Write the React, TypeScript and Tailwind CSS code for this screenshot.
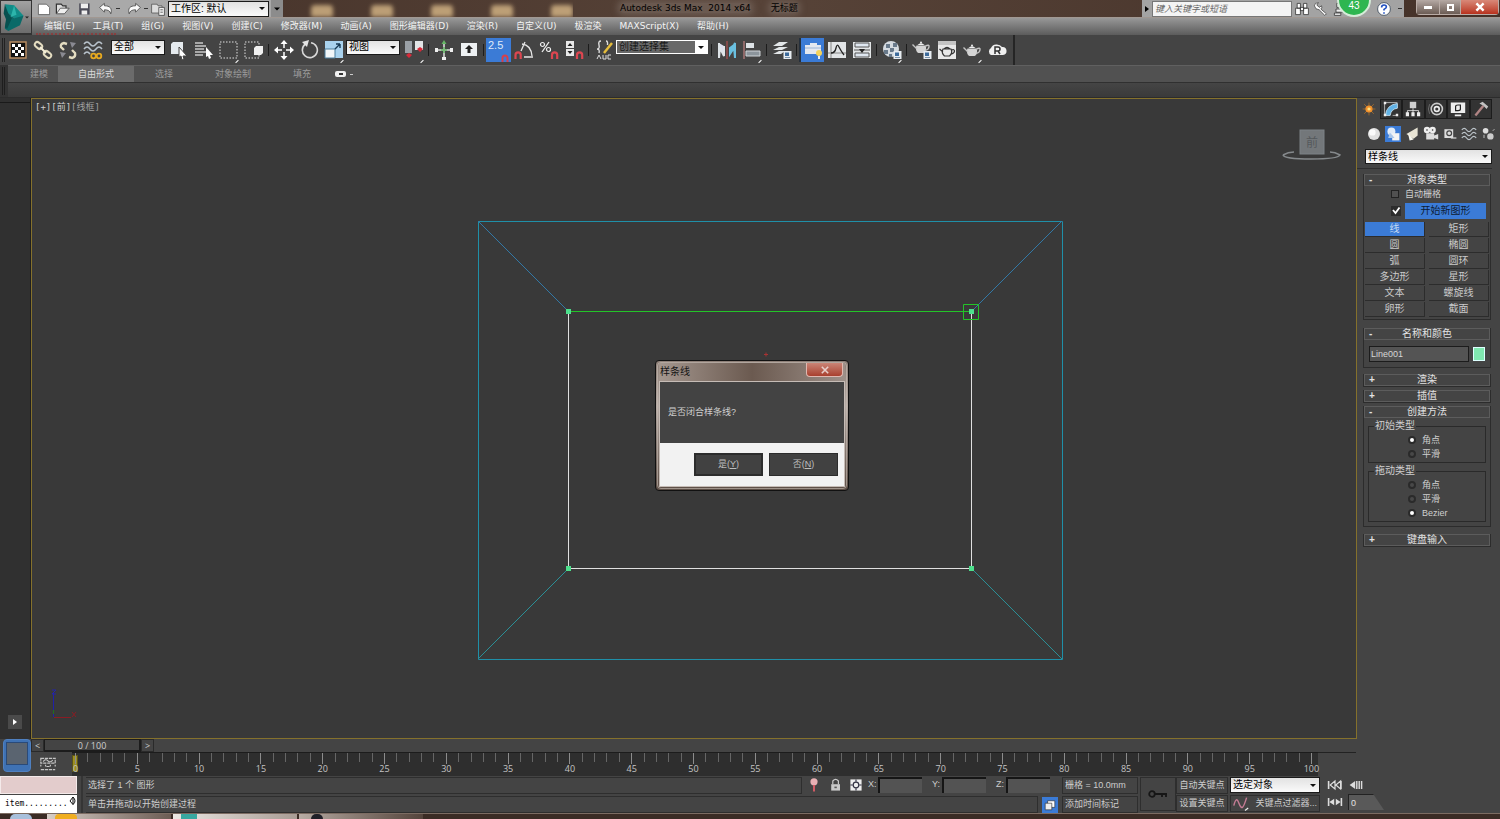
import React, { useState } from "react";

const CJK = "font-['Liberation_Sans','Noto_Sans_CJK_SC',sans-serif]";

const MENUS = [
  "编辑(E)", "工具(T)", "组(G)", "视图(V)", "创建(C)", "修改器(M)", "动画(A)", "图形编辑器(D)",
  "渲染(R)", "自定义(U)", "极渲染", "MAXScript(X)", "帮助(H)",
];

const SHAPES = ["线", "矩形", "圆", "椭圆", "弧", "圆环", "多边形", "星形", "文本", "螺旋线", "卵形", "截面"];

interface IconProps {
  children: React.ReactNode;
  className?: string;
}

function Icon({ children, className = "w-5 h-5" }: IconProps) {
  return (
    <svg viewBox="0 0 20 20" className={`${className} shrink-0`} fill="none" aria-hidden="true">
      {children}
    </svg>
  );
}

interface ToolProps {
  label: string;
  active?: boolean;
  flyout?: boolean;
  children: React.ReactNode;
}

function Tool({ label, active, flyout, children }: ToolProps) {
  return (
    <button
      aria-label={label}
      className={`relative w-[25px] h-6 shrink-0 flex items-center justify-center ${
        active ? "bg-[#3b7bd6] border-l-2 border-[#26303c]" : ""
      }`}
    >
      <Icon>{children}</Icon>
      {flyout && <span className="absolute right-0.5 bottom-0 w-1 h-px bg-white -rotate-45" />}
    </button>
  );
}

function Sep() {
  return (
    <span className="w-[5px] shrink-0 flex justify-center">
      <span className="w-px h-3 bg-[#1c1c1c]" />
    </span>
  );
}

interface SelectBoxProps {
  label: string;
  value: string;
  className: string;
  dark?: boolean;
}

function SelectBox({ label, value, className, dark }: SelectBoxProps) {
  return (
    <div className={`relative shrink-0 ${className}`}>
      <select
        aria-label={label}
        defaultValue={value}
        className={`appearance-none block w-full h-full pl-0.5 pr-3 border text-[10px] leading-3 ${
          dark ? "bg-[#686868] text-[#181818] border-white" : "border-[#1a1a1a] bg-linear-to-b from-[#e2e2e2] to-[#fafafa] text-black"
        }`}
      >
        <option>{value}</option>
      </select>
      <span className={`absolute right-px top-px bottom-px w-3 flex items-center justify-center pointer-events-none ${dark ? "bg-white" : ""}`}>
        <svg viewBox="0 0 6 3" className="w-1.5 h-[3px]"><path d="M0 0h6L3 3z" fill="#111" /></svg>
      </span>
    </div>
  );
}

const magnet = <path d="M13 19v-4a2.600 2.600 0 0 1 5.200 0v4" stroke="#dc4650" strokeWidth="2.200" />;
const badge = (
  <g>
    <rect x="11.500" y="11" width="8" height="8" fill="#e8edf2" />
    <rect x="13" y="12.500" width="4" height="3.500" fill="#3e6c9c" />
    <path d="M13 17.500h5" stroke="#7c94ab" />
  </g>
);
const teapot = (
  <g>
    <path d="M5.500 8.500c-1.500 3 0 7 2 7.500h5c2-.5 3.500-4.500 2-7.500z" fill="#d4d4d4" />
    <path d="M6.500 8q3.500-3.500 7 0z" fill="#eee" />
    <circle cx="10" cy="5.500" r="1" fill="#eee" />
    <path d="M6 12 1.500 7.500M14.500 9q4-2 3.500 1t-4 3.500" stroke="#c4c4c4" strokeWidth="1.400" />
  </g>
);

function Header() {
  return (
    <header className="flex h-[35px] shrink-0 relative">
      <button aria-label="Application menu" className="w-8 shrink-0 bg-linear-to-b from-[#a2a2a2] to-[#6c6c6c] border border-[#333] border-b-2 flex items-center justify-between pr-0.5">
        <svg viewBox="0 0 20 24" className="w-6 h-7 shrink-0" aria-hidden="true">
          <path d="M3 1 11 2l8 9-4 3-4-1-6-5z" fill="#118c88" />
          <path d="m5 8 6 5 8-2-3 8-10 5-3-2 1-6z" fill="#0a6a68" />
          <path d="m3 1 3 8 3 4-4 9-2-1 1-7-2-5z" fill="#07504f" />
          <path d="m11 2 2 8-5 2z" fill="#2cb5ab" />
        </svg>
        <svg viewBox="0 0 6 3" className="w-1 h-[3px]"><path d="M0 0h6L3 3z" fill="#222" /></svg>
      </button>
      <div className="flex-1 min-w-0 flex flex-col">
        <div className="h-[18px] flex bg-linear-to-r from-[#443128] via-[#574338] to-[#443128] border-b border-[#a19892]">
          <div className="flex items-center bg-[#a9a9a9] pl-1 gap-0.5 shrink-0">
            <button aria-label="New"><Icon className="w-4 h-4"><path d="M3 4h10l4 4v9H3z" fill="#fff" stroke="#555" /></Icon></button>
            <button aria-label="Open"><Icon className="w-4 h-4"><path d="M3 16V4h6l2 2h4v3" stroke="#333" strokeWidth="1.500" fill="#ddd" /><path d="m3 16 5-7h11l-6 7z" fill="#eee" stroke="#444" /></Icon></button>
            <button aria-label="Save" className="ml-1"><Icon className="w-4 h-4"><path d="M4 3h13v14H4z" fill="#4c4c58" /><path d="M6 3h9v6H6zM7 12h7v5H7z" fill="#eee" /></Icon></button>
            <button aria-label="Undo" className="ml-1"><Icon className="w-4 h-4"><path d="m2 8 6-5v3c7 0 10 3 8 10-1-4-4-5-8-5v3z" fill="#fafafa" stroke="#444" /></Icon></button>
            <span className="w-1 h-px bg-[#333]" />
            <button aria-label="Redo" className="ml-1"><Icon className="w-4 h-4"><path d="m18 8-6-5v3C5 6 2 9 4 16c1-4 4-5 8-5v3z" fill="#fafafa" stroke="#444" /></Icon></button>
            <span className="w-1 h-px bg-[#333]" />
            <button aria-label="Project folder"><Icon className="w-4 h-4"><path d="M2 4h7l1 2h5v9H2z" fill="#ddd" stroke="#555" /><path d="M11 8h7v10h-7z" fill="#eee" stroke="#444" /><path d="M13 11h3m-3 3h3" stroke="#444" /></Icon></button>
            <SelectBox label="工作区" value="工作区: 默认" className="w-[101px] h-4" />
            <button aria-label="Customize" className="w-3 h-full bg-[#8c8c8c] flex items-center justify-center">
              <svg viewBox="0 0 6 3" className="w-1.5 h-1"><path d="M0 0h6L3 3z" fill="#000" /></svg>
            </button>
          </div>
          <div className="flex items-end gap-[38px] pl-7 overflow-hidden">
            {[0, 1, 2, 3, 4].map((i) => (
              <span key={i} className="w-[22px] h-3 rounded-t-sm bg-[#d8b888] blur-[2px] opacity-80" />
            ))}
          </div>
          <h1 className="flex-1 pl-[47px] text-[9px] leading-[17px] font-['DejaVu_Sans','Noto_Sans_CJK_SC',sans-serif] text-black whitespace-pre">
            <span className="bg-[#8d8079]/40 rounded shadow-[0_0_6px_3px_#8d807966]">Autodesk 3ds Max  2014 x64</span>
            <span className="ml-5 bg-[#8d8079]/40 rounded shadow-[0_0_6px_3px_#8d807966]">无标题</span>
          </h1>
          <div className="flex items-center bg-[#a3a3a3] shrink-0 w-[262px]">
            <svg viewBox="0 0 4 6" className="w-1 h-1.5 mx-[3px] shrink-0"><path d="M0 0v6l4-3z" fill="#000" /></svg>
            <input aria-label="Search" placeholder="键入关键字或短语" className="w-[140px] shrink-0 h-4 px-0.5 bg-[#f4f4f4] border border-[#777] text-[9px] italic placeholder:text-[#666]" />
            <button aria-label="Find" className="ml-0.5"><Icon className="w-4 h-4"><path d="M4 3h4v6H4zM12 3h4v6h-4zM2 9h6v8H2zM12 9h6v8h-6zM8 8h4v4H8z" fill="#fff" stroke="#333" /></Icon></button>
            <button aria-label="Keys" className="ml-0.5"><Icon className="w-4 h-4"><path d="M3 6q0-4 5-4L6 5l3 3 3-2q1 3-1 4l7 6-2 2-7-7q-5 0-6-5z" fill="#fff" stroke="#444" /></Icon></button>
            <button aria-label="Account" className="ml-1"><Icon className="w-4 h-4"><path d="M6 3h6v5H6zM5 10h9v4H5zM3 15h8v3H3z" fill="#eee" stroke="#333" /></Icon></button>
            <button aria-label="Help" className="ml-7"><Icon className="w-4 h-4"><circle cx="10" cy="10" r="8" fill="#fff" stroke="#345" /><path d="M7 8q0-3 3-3t3 2.500q0 1.500-3 3V12m0 2v2" stroke="#1f4fc0" strokeWidth="2" /></Icon></button>
            <span className="w-1 h-px bg-[#333] ml-1.5" />
          </div>
          <div className="flex h-[15px] shrink-0 ml-3 mr-px border border-t-0 border-[#b9aca6] rounded-b text-white">
            <button aria-label="Minimize" className="w-[23px] bg-linear-to-b from-[#b5a9a4] to-[#6c5d55] border-r border-[#b9aca6] flex items-center justify-center"><span className="w-2 h-[3px] bg-white" /></button>
            <button aria-label="Restore" className="w-[21px] bg-linear-to-b from-[#b5a9a4] to-[#6c5d55] border-r border-[#b9aca6] flex items-center justify-center"><span className="w-[7px] h-[7px] border-2 border-white" /></button>
            <button aria-label="Close" className="w-[37px] bg-linear-to-b from-[#d88878] to-[#b8301c] flex items-center justify-center"><Icon className="w-3 h-3"><path d="m4 4 12 12M16 4 4 16" stroke="#fff" strokeWidth="4" /></Icon></button>
          </div>
        </div>
        <nav className="flex-1 bg-linear-to-b from-[#989898] to-[#5c5c5c] flex items-center gap-[18px] pl-3 pt-px text-[9px] font-['DejaVu_Sans','Noto_Sans_CJK_SC',sans-serif] text-[#f4f4f4] whitespace-nowrap">
          {MENUS.map((m) => (
            <button key={m}>{m}</button>
          ))}
        </nav>
      </div>
      <span className="absolute left-9 bottom-0 w-20 border-b-2 border-dotted border-[#b02020]/50" />
      <span className="absolute right-[129px] -top-[17px] w-[34px] h-[34px] rounded-full bg-[#2eb650] border-2 border-[#d5ecd8] text-white text-[10px] flex items-end justify-center pb-1 leading-[10px]">43</span>
    </header>
  );
}

function MainToolbar() {
  return (
    <div className="flex h-[30px] shrink-0 bg-[#444444]">
      <div className="flex items-center pr-1 border-r-2 border-[#252525]">
        <span className="w-[3px] h-6 ml-0.5 border-x border-[#222]" />
        <Tool label="Selection lock">
          <rect x="2" y="2" width="16" height="16" fill="#111" stroke="#b58a60" strokeWidth="1.500" />
          <path d="M4 4h3v3H4zM10 4h3v3h-3zM7 7h3v3H7zM13 7h3v3h-3zM4 10h3v3H4zM10 10h3v3h-3zM7 13h3v3H7zM13 13h3v3h-3z" fill="#fff" />
        </Tool>
        <Tool label="Link">
          <rect x="1.500" y="3" width="8" height="5" rx="2.500" transform="rotate(40 5.500 5.500)" stroke="#e4dcc0" strokeWidth="2" />
          <rect x="10.500" y="12" width="8" height="5" rx="2.500" transform="rotate(40 14.500 14.500)" stroke="#e4dcc0" strokeWidth="2" />
          <path d="m7 7 6 6" stroke="#f4eed8" strokeWidth="2" />
        </Tool>
        <Tool label="Unlink">
          <path d="M9 4 6 3Q2 4 3 7l3 3M11 17l3 1q4-1 3-5l-3-3" stroke="#e4dcc0" strokeWidth="2.400" />
          <path d="m12 2 6 1-4 5zM2 12l6 1-4 5z" fill="#8a8a92" />
        </Tool>
        <Tool label="Bind to space warp">
          <path d="M1 4q3-4 6 0t6 0 6 0M1 9q3-4 6 0t6 0 6 0M1 14q3-4 6 0" stroke="#b9c3cc" strokeWidth="1.500" />
          <circle cx="10.500" cy="16" r="2.300" stroke="#e8aa20" strokeWidth="1.800" /><circle cx="16" cy="16" r="2.300" stroke="#e8aa20" strokeWidth="1.800" />
        </Tool>
        <SelectBox label="Selection filter" value="全部" className="w-[54px] h-[15px] ml-1.5 mr-px -mt-1.5" />
        <Tool label="Select object">
          <path d="M2 4 4 2h10v10l-2 2H2z" fill="#e6ebef" /><path d="m10 7 8 9h-4l1 3-2 1-1-4-2 1z" fill="#fff" stroke="#444" />
        </Tool>
        <Tool label="Select by name">
          <path d="M1 3h8M1 6h11M1 9h9M1 12h11M1 15h8" stroke="#c9c9c9" strokeWidth="1.300" /><path d="m12 7 7 8h-3l1 3-2 1-1-3-2 1z" fill="#fff" />
        </Tool>
        <Tool label="Rectangular region" flyout><rect x="1" y="2" width="17" height="16" stroke="#e0e0e0" strokeDasharray="1.500 1.500" /></Tool>
        <Tool label="Window crossing">
          <rect x="1" y="2" width="14" height="16" stroke="#e0e0e0" strokeDasharray="1.500 1.500" /><path d="m10 8 2-2h7v7l-2 2h-7z" fill="#f0f0f0" />
        </Tool>
        <Sep />
        <Tool label="Move">
          <path d="M10 4v12M4 10h12" stroke="#fff" strokeWidth="1.500" strokeDasharray="4 4" />
          <path d="m10 0 3.500 4h-7zM10 20l3.500-4h-7zM0 10l4-3.500v7zM20 10l-4-3.500v7z" fill="#fff" />
        </Tool>
        <Tool label="Rotate"><path d="M6.500 4A7.500 7.500 0 1 0 12 2.700" stroke="#d8d8d8" strokeWidth="1.600" /><path d="m10 0-7 2 5 5z" fill="#e4e4e4" /></Tool>
        <Tool label="Scale" flyout>
          <path d="M1 1h18v17H1z" fill="#a9d2ee" /><path d="M1 9h10v9H1z" fill="#f2f6f8" stroke="#4a7c9c" /><path d="m11 9 5-5m0 0h-4m4 0v4" stroke="#173a54" strokeWidth="1.400" />
        </Tool>
        <SelectBox label="Reference coordinate system" value="视图" className="w-[54px] h-[15px] mr-px -mt-1.5" />
        <Tool label="Use pivot point center" flyout>
          <path d="M1 1h7v12H1z" fill="#9aa0a6" /><path d="M11 1h8v9h-8z" fill="#e2e4e6" /><path d="m2 15 3-2 3 2-3 3zM13 9l3-2 3 2-3 3z" fill="#d82838" />
        </Tool>
        <Sep />
        <Tool label="Manipulate">
          <path d="M10 3v15M2 10h16" stroke="#d6dad6" strokeWidth="1.600" /><path d="m10 0 2.500 4h-5z" fill="#65b565" /><path d="M10 7v6M7 10h6" stroke="#77b977" strokeWidth="2" />
          <path d="M1 8h3v4H1zM16 8h3v4h-3zM8 17h4v3H8z" fill="#eee" />
        </Tool>
        <Tool label="Keyboard shortcut override"><path d="M2 3h16v13H2z" fill="#eef1f3" /><path d="m10 5 4 4h-2.500v4h-3V9H6z" fill="#222" /></Tool>
        <Sep />
        <button aria-label="Snaps toggle" className="relative w-[25px] h-6 bg-[#3b7bd6] text-[#dfe9f8] text-[11px] leading-none flex items-start pt-0.5 pl-0.5">
          2.5
          <svg viewBox="0 0 8 8" className="absolute right-0.5 bottom-0 w-2 h-2"><path d="M1.500 8V4a2.500 2.500 0 0 1 5 0v4" fill="none" stroke="#d8404a" strokeWidth="2" /></svg>
        </button>
        <Tool label="Angle snap">
          <path d="M7 11 11 2m-3 2q9 1 10 12M10 17h9" stroke="#e6e6e6" strokeWidth="1.300" /><path d="M1.500 19v-4a2.600 2.600 0 0 1 5.200 0v4" stroke="#dc4650" strokeWidth="2.200" />
        </Tool>
        <Tool label="Percent snap"><circle cx="3.500" cy="4.500" r="2" stroke="#eee" strokeWidth="1.200" /><circle cx="9.500" cy="9.500" r="2" stroke="#eee" strokeWidth="1.200" /><path d="M10 2 3 12" stroke="#eee" strokeWidth="1.300" />{magnet}</Tool>
        <Tool label="Spinner snap"><path d="M2 1h8v7H2zM2 9h8v7H2z" fill="#e8e8e8" /><path d="m6 3 2.500 3h-5zM6 14l2.500-3h-5z" fill="#222" />{magnet}</Tool>
        <Sep />
        <Tool label="Edit named selection sets">
          <path d="M7 1Q4 1 5 5t-2 4q3 0 2 4M12 1q2 0 1.500 4" stroke="#ddd" strokeWidth="1.400" /><path d="m18 3-8 10" stroke="#e5bd3c" strokeWidth="2.500" /><path d="m3 19 2-4 2 4m2-4v4h3v-4m5 0h-3v4h3" stroke="#ddd" />
        </Tool>
        <SelectBox label="Named selection sets" value="创建选择集" dark className="w-[92px] h-[14px] mr-px -mt-1.5" />
        <Sep />
        <Tool label="Mirror"><path d="M2 3v15l1-10 4 8V6" fill="#dde" stroke="#dfe4e8" strokeWidth="2" /><path d="M10 1v18" stroke="#c05050" /><path d="M18 3v15l-1-10-4 6V8l4-3z" fill="#6ac0e0" stroke="#6ac0e0" strokeWidth="2" /></Tool>
        <Tool label="Align" flyout><path d="M2 1v18" stroke="#d88c8c" /><path d="M4 3h8v5H4z" fill="#dde2e6" /><path d="M4 11h14v5H4z" fill="#8c959c" stroke="#cfd4d8" /></Tool>
        <Sep />
        <Tool label="Layer manager"><path d="m1 6 6-4h9l-6 4zM1 10l6-3h9l-6 3zM1 14l6-3h6l-4 3z" fill="#e2e6e8" />{badge}</Tool>
        <Sep />
        <Tool label="Toggle ribbon" active><path d="M2 5h5V3h7v2h4v9H2z" fill="#e4e8f0" /><path d="M2 8h16" stroke="#9cb4d6" /><circle cx="16" cy="13" r="3" fill="#f5d35c" /><path d="M16 16v3" stroke="#eee" strokeWidth="2" /></Tool>
        <Tool label="Curve editor"><path d="M1 2h18v16H1z" fill="#e2e5e7" /><path d="M4 2v16M1 13h18" stroke="#888" /><path d="M4 13q4 0 5-5t3-1 5 8" stroke="#222" strokeWidth="1.300" /></Tool>
        <Tool label="Schematic view"><path d="M1 2h18v16H1z" fill="#e2e5e7" /><path d="M3 3h14v4H3zM3 13h14v4H3z" fill="#dfe7f0" stroke="#555" /><path d="M2 10h16" stroke="#555" /><path d="m10 13-3-4h6z" fill="#222" /></Tool>
        <Sep />
        <Tool label="Material editor" flyout><circle cx="9" cy="9" r="8" fill="#d4dae0" /><path d="M4 4h4v4H4zM11 3h4v4h-4zM2 10h4v4H2zM8 8h4v4H8zM7 14h3v3H7z" fill="#68798a" />{badge}</Tool>
        <Sep />
        <Tool label="Render setup"><g transform="translate(-1 -3)">{teapot}</g>{badge}</Tool>
        <Tool label="Rendered frame window"><path d="M1 1h18v18H1z" fill="#e8e8e8" /><path d="M1 1h18v4H1z" fill="#c4c4c4" /><path d="M6 9h8q2 4-1.500 7h-5Q4 13 6 9zm0 3L2.500 9M14.500 10q3-1 3 1t-3 3M7 9q3-3 6 0" stroke="#333" strokeWidth="1.200" /></Tool>
        <Tool label="Render production" flyout>{teapot}</Tool>
        <Tool label="Autodesk 360">
          <path d="M4 15a4 4 0 0 1 0-7 6 5 0 0 1 11-1 4 4 0 0 1 1 8z" fill="#f0f0f0" />
          <path d="M8 14V7h3q2 0 2 2t-2 2H8m3 0 2 3" stroke="#333" strokeWidth="1.500" />
        </Tool>
      </div>
    </div>
  );
}

function Ribbon() {
  return (
    <div className="flex h-8 shrink-0 bg-[#333]">
      <span className="w-[3px] h-7 mt-0.5 ml-0.5 mr-[3px] border-x border-[#1e1e1e]" />
      <div className="flex-1 flex flex-col">
        <div className="h-[17px] flex bg-[#515151] border-t border-[#606060] text-[9px] leading-[17px] text-[#9c9c9c]">
          <button className="pl-[22px] pr-[10px]">建模</button>
          <button className="px-5 bg-[#6b6b6b] text-[#dadada]">自由形式</button>
          <button className="px-[21px]">选择</button>
          <button className="pl-[21px] pr-[22px]">对象绘制</button>
          <button className="px-5">填充</button>
          <button aria-label="Ribbon options" className="flex items-center gap-1 pl-1">
            <span className="w-[11px] h-1.5 rounded-xs bg-[#f0f0f0] flex items-center justify-center"><span className="w-1 h-0.5 bg-[#333]" /></span>
            <span className="w-[3px] h-px bg-[#ccc]" />
          </button>
        </div>
        <div className="flex-1 bg-linear-to-b from-[#454545] to-[#3a3a3a] border-t border-[#303030]" />
      </div>
    </div>
  );
}

function SplineDialog({ onClose }: { onClose: () => void }) {
  const btn = "w-[69px] h-[23px] bg-[#414141] border border-[#2c2c2c] text-[#bdbdbd] text-[9px]";
  return (
    <div role="dialog" aria-label="样条线" className="absolute left-[623px] top-[261px] w-[194px] rounded border border-[#111] bg-linear-to-b from-[#8d7f77] via-[#b5aaa4] via-35% to-[#5d4e46] p-px">
      <div className="rounded-sm border border-[#c9bfb8]/60 px-px pb-px">
        <div className="flex justify-between items-start h-[18px] bg-linear-to-r from-[#a4978f] via-[#6b5a50] to-[#9d9089]">
          <span className="pl-px text-[10px] leading-[17px] text-[#141414]">样条线</span>
          <button aria-label="关闭" onClick={onClose} className="w-[37px] h-[14px] mr-0.5 rounded-b-sm border border-t-0 border-[#e0b8b0] bg-linear-to-b from-[#c98476] to-[#a83f2e] flex items-center justify-center">
            <Icon className="w-2 h-2"><path d="m2 2 16 16M18 2 2 18" stroke="#e8d0cc" strokeWidth="4" /></Icon>
          </button>
        </div>
        <div className="border border-[#c6bcb6]">
          <p className="h-[61px] bg-[#434343] pl-2 flex items-center text-[9px] text-[#cfcfcf]">是否闭合样条线?</p>
          <div className="h-[43px] bg-[#f2f2f2] flex items-center justify-end gap-1.5 pr-1.5">
            <button className={`${btn} ring-1 ring-inset ring-[#2c2c2c]`} onClick={onClose}>是(<u>Y</u>)</button>
            <button className={btn} onClick={onClose}>否(<u>N</u>)</button>
          </div>
        </div>
      </div>
    </div>
  );
}

function Viewport() {
  const [open, setOpen] = useState(true);
  return (
    <main className="relative flex-1 min-w-0 bg-[#393939] border border-[#85712c]">
      <svg viewBox="0 0 1324 639" className="absolute inset-0 w-full h-full" fill="none" aria-hidden="true">
        <g transform="translate(1 1)">
          <path d="M445.500 121.500h584v438h-584z" stroke="#1f8fa8" />
          <path d="m445 121 90 90M1029 121l-90 90" stroke="#3278a6" />
          <path d="m445 559 90-90M1029 559l-90-90" stroke="#2b8f96" />
          <path d="M535.500 211.500v257h403v-257" stroke="#e0e0e0" />
          <path d="M535 211.500h404M930.500 204.500h15v15h-15z" stroke="#23c428" />
          <path d="M533 209h5v5h-5zM936 209h5v5h-5zM533 466h5v5h-5zM936 466h5v5h-5z" fill="#4ce08c" />
          <path d="M731 254.500h4M733 252.500v4" stroke="#a83232" />
          <path d="M20.500 593v24" stroke="#2020a8" />
          <path d="M19 590h4l-4 4h4" stroke="#2424a8" />
          <path d="M21 617.500h17M39 612l4 5m0-5-4 5" stroke="#8a1c24" />
          <path d="M20.500 610v4" stroke="#207020" />
          {/* view cube with compass ring */}
          <path d="M1250 55q1 4 28 4t29-4q-5-3-10-3M1250 55q5-3 11-3" stroke="#85898c" strokeWidth="1.500" />
          <rect x="1267" y="30" width="24" height="24" fill="#73777a" stroke="#7d8286" />
          <text x="1279" y="47" textAnchor="middle" fontSize="12" fill="#55595c">前</text>
        </g>
      </svg>
      <div className="absolute left-[3px] top-0.5 text-[9px] leading-3 text-[#d0d0d0] font-['DejaVu_Sans_Mono','Noto_Sans_CJK_SC',monospace]">
        [+][前]<span className="text-[#a0a0a0]">[线框]</span>
      </div>
      {open && <SplineDialog onClose={() => setOpen(false)} />}
    </main>
  );
}

interface RolloutProps {
  title: string;
  open?: boolean;
  children?: React.ReactNode;
}

function Rollout({ title, open, children }: RolloutProps) {
  return (
    <section className="border border-t-0 border-[#2c2c2c]">
      <button className="block w-full h-3 relative border border-[#5c5c5c] text-[10px] leading-[10px] text-[#e2e2e2] text-center" aria-expanded={!!open}>
        <span className="absolute left-1 top-0 font-bold">{open ? "-" : "+"}</span>
        {title}
      </button>
      {children}
    </section>
  );
}

function RadioGroup({ name, items, checked }: { name: string; items: string[]; checked: string }) {
  return (
    <fieldset className="mx-1 border border-[#2a2a2a] pl-[39px] pt-px pb-px text-[9px] leading-[14px] text-[#cfcfcf]">
      <legend className="-ml-[34px] px-px leading-3 text-[10px]">{name}</legend>
      {items.map((t) => (
        <label key={t} className="flex items-center gap-1.5 h-[14px]">
          <input
            type="radio"
            name={name}
            defaultChecked={t === checked}
            className="appearance-none w-2 h-2 rounded-full border-2 border-[#2a2a2a] bg-[#484848] checked:bg-white"
          />
          {t}
        </label>
      ))}
    </fieldset>
  );
}

function CommandPanel() {
  const [shape, setShape] = useState("线");
  const tab = "flex-1 h-5 flex items-center justify-center border border-[#1c1c1c] bg-[#333]";
  return (
    <aside className="w-[143px] shrink-0 bg-[#444444] pt-px pr-2 flex flex-col">
      <div className="flex pl-0.5">
        <button aria-label="Create" className="flex-1 h-5 flex items-center justify-center bg-[#444]">
          <Icon className="w-4 h-4"><path d="M10 2v16M2 10h16M4 4l12 12M16 4 4 16" stroke="#a8702c" /><circle cx="10" cy="10" r="4.500" fill="#f0902c" /><circle cx="10" cy="10" r="2" fill="#ffe07c" /></Icon>
        </button>
        <button aria-label="Modify" className={tab}><Icon className="w-4 h-4"><path d="M2 18V2h16M18 18h-6" stroke="#ccc" /><path d="M3 18Q4 5 18 3v6q-8 1-9 9z" fill="#62b3e6" stroke="#cfeafa" /><path d="M1 1h3v3H1zM16 16h3v3h-3zM1 16h3v3H1z" fill="#eee" /></Icon></button>
        <button aria-label="Hierarchy" className={tab}><Icon className="w-4 h-4"><path d="M6 1h8v8H6z" fill="#d0d0d0" /><path d="M10 9v6M3 15v-3h14v3" stroke="#eee" /><path d="M1 14h4v5H1zM8 14h4v5H8zM15 14h4v5h-4z" fill="#eee" /></Icon></button>
        <button aria-label="Motion" className={tab}><Icon className="w-4 h-4"><circle cx="11" cy="10" r="7" stroke="#ccc" strokeWidth="2" /><circle cx="11" cy="10" r="3" stroke="#eee" strokeWidth="2" /><path d="M2 4q-3 6 0 12" stroke="#777" /></Icon></button>
        <button aria-label="Display" className={tab}><Icon className="w-4 h-4"><path d="M1 2h18v13H1zM6 17h8v2H6z" fill="#eee" /><path d="M7 7q0-2 3-2h3v5q0 2-3 2H7z" stroke="#222" strokeWidth="1.500" /></Icon></button>
        <button aria-label="Utilities" className={tab}><Icon className="w-4 h-4"><path d="M3 18 13 6" stroke="#b08484" strokeWidth="3" /><path d="m8 3 4-2 7 6-2 3-4-4z" fill="#c2c2c2" /></Icon></button>
      </div>
      <div className="flex pl-[9px] mt-[7px] -mr-2 items-center justify-between pr-1">
        <button aria-label="Geometry"><Icon className="w-4 h-4"><circle cx="10" cy="10" r="7.500" fill="#e0e0e0" /><circle cx="8" cy="8" r="4" fill="#fafafa" /></Icon></button>
        <button aria-label="Shapes" className="bg-[#3b7bd6]"><Icon className="w-4 h-4"><circle cx="8" cy="7" r="5" fill="#e2ecf8" /><path d="M9 9h9v9H9z" fill="#f4f4f4" /><path d="m6 8 6 7h-8z" fill="#a9c6ea" /></Icon></button>
        <button aria-label="Lights"><Icon className="w-4 h-4"><path d="M17 2v10l-5 4-9-6z" fill="#e8e4d4" /><path d="m5 9 7 8-5 1z" fill="#f8f8f0" /></Icon></button>
        <button aria-label="Cameras"><Icon className="w-4 h-4"><circle cx="5" cy="5" r="4" fill="#eee" /><circle cx="12" cy="5" r="4" fill="#eee" /><path d="M4 9h10v8H4zM14 12l5-2v7l-5-2z" fill="#ddd" /><circle cx="5" cy="5" r="1" fill="#333" /><circle cx="12" cy="5" r="1" fill="#333" /></Icon></button>
        <button aria-label="Helpers"><Icon className="w-4 h-4"><path d="M3 4h11v11H3z" fill="#dcdcdc" /><circle cx="9" cy="9" r="3" stroke="#444" strokeWidth="1.500" /><path d="M11 15h7" stroke="#ddd" strokeWidth="1.500" /></Icon></button>
        <button aria-label="Space warps"><Icon className="w-4 h-4"><path d="M1 5q3-4 6 0t6 0 6 0M1 10q3-4 6 0t6 0 6 0M1 15q3-4 6 0t6 0 6 0" stroke="#bcc4ca" strokeWidth="1.500" /></Icon></button>
        <button aria-label="Systems"><Icon className="w-4 h-4"><circle cx="7" cy="6" r="3.500" fill="#ddd" /><circle cx="13" cy="13" r="4" fill="#ccc" /><path d="M5 11v4M16 6l2-2" stroke="#ddd" /></Icon></button>
      </div>
      <SelectBox label="Category" value="样条线" className="h-[15px] ml-2 mt-[7px]" />
      <div className="mt-1 border-t border-[#2f2f2f]" />
      <div className="flex flex-col gap-[3px] pl-1.5 pt-[5px] mr-px">
        <Rollout title="对象类型" open>
          <div className="pl-[27px] text-[9px] text-[#cfcfcf]">
            <label className="flex items-center gap-1.5 h-4 leading-4">
              <input type="checkbox" className="appearance-none w-2 h-2 border border-[#222] bg-[#505050]" />
              自动栅格
            </label>
            <label className="flex items-center gap-1 h-4 mt-px">
              <span className="relative w-[10px] h-[10px] shrink-0">
                <input type="checkbox" defaultChecked className="appearance-none block w-[10px] h-[10px] bg-[#2c2c2c]" />
                <svg viewBox="0 0 10 10" className="absolute inset-0 pointer-events-none"><path d="m2 4 2.500 3L8.500 1.500" fill="none" stroke="#fff" strokeWidth="1.800" /></svg>
              </span>
              <span className="flex-1 mr-1 h-4 bg-[#3b7bd6] text-center text-[10px] leading-4 text-[#0d1c33]">开始新图形</span>
            </label>
          </div>
          <div className="grid grid-cols-2 gap-x-1 gap-y-px px-px pt-[3px] pb-0.5">
            {SHAPES.map((s) => (
              <button
                key={s}
                onClick={() => setShape(s)}
                className={`h-[15px] border-b border-r border-[#2c2c2c] text-[10px] leading-[14px] ${
                  s === shape ? "bg-[#3b7bd6] text-[#c8dcf4]" : "text-[#cacaca]"
                }`}
              >
                {s}
              </button>
            ))}
          </div>
        </Rollout>
        <div className="mt-[5px]">
          <Rollout title="名称和颜色" open>
            <div className="flex items-center gap-1 px-[5px] pt-1.5 pb-[5px]">
              <input aria-label="名称" defaultValue="Line001" className="flex-1 min-w-0 h-4 bg-[#545454] border border-[#1c1c1c] px-px text-[9px] text-[#d6d6d6]" />
              <button aria-label="颜色" className="w-3 h-[14px] bg-[#80e8b0] border border-[#dff]" />
            </div>
          </Rollout>
        </div>
        <div className="mt-[3px]"><Rollout title="渲染" /></div>
        <Rollout title="插值" />
        <Rollout title="创建方法" open>
          <div className="flex flex-col gap-0.5 pb-1 pt-0.5">
            <RadioGroup name="初始类型" items={["角点", "平滑"]} checked="角点" />
            <RadioGroup name="拖动类型" items={["角点", "平滑", "Bezier"]} checked="Bezier" />
          </div>
        </Rollout>
        <div className="mt-1"><Rollout title="键盘输入" /></div>
      </div>
    </aside>
  );
}

function TimeRuler() {
  const frames = Array.from({ length: 101 }, (_, i) => i);
  return (
    <div className="relative flex-1 flex justify-between pl-[3px] pr-[5px] bg-[#2e2e2e] border-t border-[#1c1c1c]">
      <span className="absolute left-0 top-0.5 bottom-1 w-1.5 bg-[#9c8f22] border border-[#5c5414]" />
      {frames.map((f) => (
        <div key={f} className="relative w-px flex flex-col items-center">
          <span className={`w-px shrink-0 ${f % 5 === 0 ? "h-[11px] bg-[#8c8c8c]" : "h-[9px] bg-[#666]"}`} />
          {f % 5 === 0 && <span className="text-[9px] leading-[9px] text-[#c4c4c4] font-['Open_Sans',sans-serif]">{f}</span>}
        </div>
      ))}
    </div>
  );
}

function StatusBar() {
  const cell = "border border-[#2e2e2e] px-0.5 overflow-hidden";
  return (
    <footer className="flex h-[37px] shrink-0 bg-[#444444] text-[9px] text-[#cdcdcd] whitespace-nowrap">
      <div className="w-[77px] shrink-0 flex flex-col gap-px">
        <div className="h-[18px] bg-[#e3cccc] border border-[#f4eaea]" />
        <div className="flex-1 bg-white text-black text-[8px] leading-4 pl-[5px] pt-px flex font-['DejaVu_Sans_Mono',monospace]">
          item.........
          <Icon className="w-2.5 h-2.5"><path d="M10 2 4 10l6 7q8-7 0-15zm0 0v15" stroke="#111" strokeWidth="2" /></Icon>
        </div>
      </div>
      <div className="flex-1 min-w-0 pl-[3px] pr-0.5 flex flex-col gap-0.5 border-l-2 border-[#353535] ml-1">
        <div className="h-[18px] flex items-center">
          <span className={`${cell} flex-1 h-[17px] leading-[15px] border-l-0`}>选择了 1 个 图形</span>
          <button aria-label="Isolate" className="ml-1"><Icon className="w-4 h-4"><circle cx="10" cy="6" r="4.500" fill="#e8b0b4" /><path d="M10 10v8" stroke="#d05a64" strokeWidth="2.500" /></Icon></button>
          <button aria-label="Lock" className="ml-1.5"><Icon className="w-4 h-4"><path d="M4 9h11v8H4z" fill="#c9c9c9" /><path d="M6 9V5q3.500-4 7 0v4" stroke="#c9c9c9" strokeWidth="1.500" /><path d="M8 12h3v2H8z" fill="#555" /></Icon></button>
          <button aria-label="Transform type-in" className="ml-1 mr-1"><Icon className="w-4 h-4"><path d="M3 3h14v14H3z" fill="#eee" /><circle cx="10" cy="10" r="3.500" stroke="#334" strokeWidth="1.500" /><path d="M3 10h3m8 0h3M10 3v3m0 8v3" stroke="#334" strokeWidth="1.500" /></Icon></button>
          {["X:", "Y:", "Z:"].map((a) => (
            <label key={a} className="flex items-center mr-2.5">
              <span className="w-2.5">{a}</span>
              <input className="w-11 h-4 bg-[#535353] border-t-2 border-l-2 border-[#151515]" />
            </label>
          ))}
          <span className={`${cell} w-[76px] h-[17px] leading-[15px] ml-0.5`}>栅格 = 10.0mm</span>
        </div>
        <div className="h-[17px] flex items-center gap-1">
          <span className={`${cell} flex-1 h-[17px] leading-[15px] border-l-0`}>单击并拖动以开始创建过程</span>
          <button aria-label="Communication center" className="w-4 h-4 bg-[#3b7bd6] flex items-center justify-center"><Icon className="w-3 h-3"><path d="M6 3h12v11H6z" fill="#fff" stroke="#222" /><path d="M2 7h11v11H2z" fill="#eee" stroke="#222" /></Icon></button>
          <span className={`${cell} w-[76px] h-[17px] leading-[15px]`}>添加时间标记</span>
        </div>
      </div>
      <button aria-label="Set keys" className="w-9 h-[34px] my-px border border-[#2e2e2e] flex items-center justify-center">
        <svg viewBox="0 0 20 8" className="w-5 h-2" fill="none"><circle cx="4" cy="4" r="2.800" stroke="#161616" strokeWidth="1.800" /><path d="M7 4h12M14 4v3M18 4v3" stroke="#161616" strokeWidth="1.800" /></svg>
      </button>
      <div className="w-[52px] flex flex-col gap-px py-px">
        <button className="h-[17px] border border-[#2e2e2e]">自动关键点</button>
        <button className="h-[17px] border border-[#2e2e2e]">设置关键点</button>
      </div>
      <div className="w-[90px] ml-0.5 flex flex-col gap-0.5 py-px">
        <SelectBox label="Key mode" value="选定对象" className="h-4" />
        <button className="h-[17px] border border-[#2e2e2e] flex items-center justify-between px-0.5">
          <Icon className="w-4 h-4"><path d="M1 12q3-12 6-4t5 6 5-12" stroke="#c47c94" strokeWidth="1.800" /><path d="m15 18 4-3" stroke="#eee" strokeWidth="1.500" /></Icon>
          关键点过滤器...
        </button>
      </div>
      <div className="w-[180px] pl-[7px] grid grid-cols-[21px_1fr] content-start justify-items-start text-[#e2e2e2]">
        <button aria-label="Go to start" className="h-[17px]"><Icon className="w-4 h-4"><path d="M2 5v10" stroke="#ddd" strokeWidth="2" /><path d="m10 5-6 5 6 5zM17 5l-6 5 6 5z" stroke="#ddd" strokeWidth="1.500" /><path d="M18 5v10" stroke="#ddd" /></Icon></button>
        <button aria-label="Previous frame" className="h-[17px]"><Icon className="w-4 h-4"><path d="m9 5-7 5 7 5z" fill="#ddd" /><path d="M11 5v10M14 5v10M17 5v10" stroke="#ddd" strokeWidth="1.800" /></Icon></button>
        <button aria-label="Key mode toggle" className="h-[18px]"><Icon className="w-4 h-4"><path d="M2 5v10M18 5v10" stroke="#ddd" strokeWidth="2" /><path d="m9 6-6 4 6 4zM11 6l6 4-6 4z" fill="#ddd" /></Icon></button>
        <input aria-label="Frame" defaultValue="0" className="w-9 h-4 mt-px bg-[#595959] border-t border-l border-[#222] px-0.5 text-[9px] [clip-path:polygon(0_0,70%_0,100%_100%,0_100%)]" />
      </div>
    </footer>
  );
}

export default function App() {
  return (
    <div className={`h-screen flex flex-col overflow-hidden bg-[#444444] ${CJK}`}>
      <Header />
      <MainToolbar />
      <Ribbon />
      <div className="flex-1 min-h-0 flex border-t border-[#2c2c2c]">
        <div className="w-[31px] shrink-0 bg-[#303030] border-r border-[#1f1f1f] flex flex-col justify-between items-center pt-1 pb-2.5">
          <span className="w-full border-t border-[#1a1a1a]" />
          <button aria-label="Expand" className="w-[14px] h-[14px] bg-[#4a4a4a] flex items-center justify-center">
            <svg viewBox="0 0 4 6" className="w-1 h-1.5"><path d="M0 0v6l4-3z" fill="#fff" /></svg>
          </button>
        </div>
        <Viewport />
        <CommandPanel />
      </div>
      <div className="h-[37px] shrink-0 flex bg-[#444444]">
        <button aria-label="Viewport layout" className="w-7 h-[33px] ml-[3px] rounded-sm bg-[#3f72b4] border border-[#4f80c0] p-0.5 pb-1.5">
          <span className="block w-full h-full bg-[#5a6470] border border-[#2a4a78]" />
        </button>
        <div className="flex-1 flex flex-col min-w-0">
          <div className="h-[13px] flex text-[9px] leading-[11px] text-[#cfcfcf] font-['Open_Sans',sans-serif]">
            <button aria-label="Previous" className="w-[13px] border border-[#2a2a2a]">&lt;</button>
            <button className="w-[97px] border border-[#1c1c1c] border-b-2 border-r-2">0 / 100</button>
            <button aria-label="Next" className="w-[13px] border border-[#2a2a2a]">&gt;</button>
          </div>
          <div className="h-6 flex">
            <button aria-label="Mini curve editor" className="w-[41px] shrink-0 flex items-center justify-center pr-[7px]">
              <Icon className="w-4 h-4"><path d="M1 3h18v6H1zM1 13v-2m6 2v-2m6 2v-2m6 2v-2M1 17h18" stroke="#c4c4c4" strokeWidth="1.500" strokeDasharray="4 1" /><path d="M4 7q3-4 6-1t6-1M8 13h4" stroke="#c4c4c4" strokeWidth="1.300" /></Icon>
            </button>
            <TimeRuler />
            <div className="w-[182px] shrink-0 pr-[144px]"><div className="border-t border-[#222]" /></div>
          </div>
        </div>
      </div>
      <StatusBar />
      <div className="h-1.5 shrink-0 flex bg-[#3b2c25] border-t border-[#7c6c62]">
        <span className="w-[22px] h-full ml-2.5 rounded-t-full bg-[#a8c0dc]" />
        <span className="w-[124px] h-full ml-[15px] bg-linear-to-r from-[#d8cfc8] to-[#6c5c54] flex"><i className="w-[22px] ml-2 bg-[#f0ae20] rounded-t" /></span>
        <span className="w-[124px] h-full ml-0.5 bg-linear-to-r from-[#ece8e4] to-[#a89c94] flex"><i className="w-4 ml-2 bg-[#38a8a0]" /></span>
        <span className="w-[124px] h-full ml-0.5 bg-linear-to-r from-[#b8aca4] to-[#54443c] flex"><i className="w-3 ml-3 rounded-t-full bg-[#202028]" /></span>
      </div>
    </div>
  );
}
